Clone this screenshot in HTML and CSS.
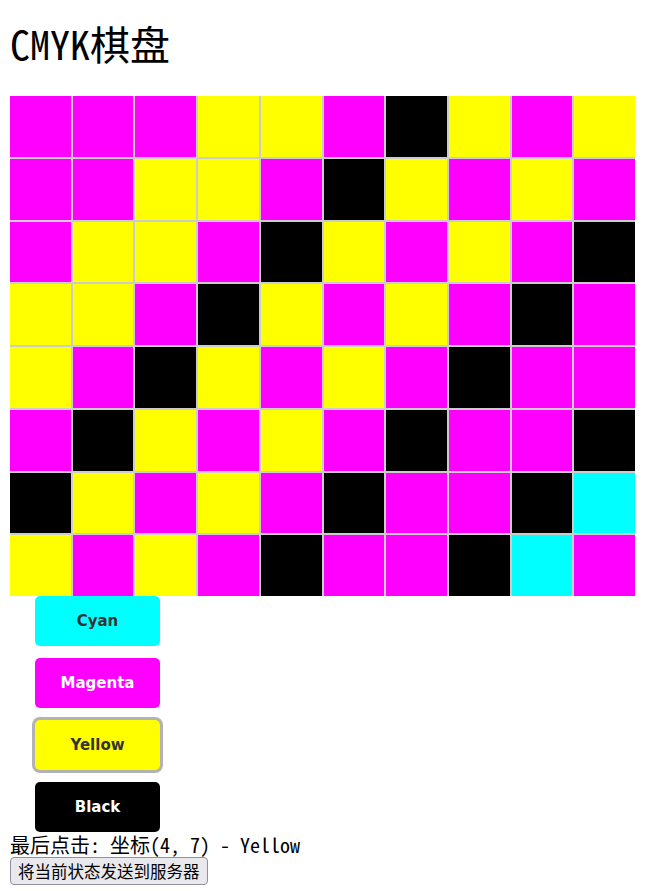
FILE: index.html
```html
<!DOCTYPE html>
<html lang="zh-CN">
<head>
<meta charset="UTF-8">
<meta name="viewport" content="width=device-width, initial-scale=1.0">
<title>CMYK棋盘</title>
<link rel="stylesheet" href="styles.css">
</head>
<body>
<h1>CMYK棋盘</h1>
<div class="board" id="board"></div>

<div class="palette">
    <button class="swatch cyan">Cyan</button>
    <button class="swatch magenta">Magenta</button>
    <button class="swatch yellow selected">Yellow</button>
    <button class="swatch black">Black</button>
</div>

<div class="status" id="status">最后点击: 坐标(4, 7) - Yellow</div>
<button class="send">将当前状态发送到服务器</button>

<script>
    const rows = [
        'MMMYYMKYMY',
        'MMYYMKYMYM',
        'MYYMKYMYMK',
        'YYMKYMYMKM',
        'YMKYMYMKMM',
        'MKYMYMKMMK',
        'KYMYMKMMKC',
        'YMYMKMMKCM'
    ];
    const names = { C: 'cyan', M: 'magenta', Y: 'yellow', K: 'black' };
    const board = document.getElementById('board');

    rows.forEach(row => {
        row.split('').forEach(ch => {
            const cell = document.createElement('div');
            cell.className = 'cell ' + names[ch];
            board.appendChild(cell);
        });
    });
</script>
</body>
</html>
```

FILE: styles.css
```css
body {
    margin: 0 10px;
    font-family: "Noto Sans Mono CJK SC", "Liberation Mono", "Noto Sans CJK SC", monospace;
    color: #000;
}
h1 {
    font-size: 40px;
    font-weight: normal;
    line-height: 42px;
    margin: 0 0 32px;
    padding-top: 22px;
}
.board {
    display: grid;
    grid-template-columns: repeat(10, 1fr);
    grid-template-rows: repeat(8, 1fr);
    gap: 2px;
    width: 625px;
    height: 500px;
    background-color: #ccc;
}
.cyan { background-color: #00ffff; }
.magenta { background-color: #ff00ff; }
.yellow { background-color: #ffff00; }
.black { background-color: #000000; }

.palette {
    display: flex;
    flex-direction: column;
    align-items: flex-start;
    gap: 12px;
    padding-left: 25px;
}
.swatch {
    width: 125px;
    height: 50px;
    border: none;
    border-radius: 5px;
    font-family: "DejaVu Sans", Verdana, sans-serif;
    font-size: 15px;
    font-weight: bold;
    color: #333;
    cursor: pointer;
}
.swatch.magenta, .swatch.black { color: #fff; }
.swatch.selected {
    box-shadow: 0 0 0 3px #b3b3b3;
}
.status {
    font-size: 20px;
    line-height: 24px;
    margin-top: 1px;
}
.send {
    font-family: "Noto Sans CJK SC", sans-serif;
    font-size: 16.5px;
    line-height: 22px;
    padding: 2px 7px;
    background-color: #e9e9ed;
    border: 1px solid #8f8f9d;
    border-radius: 4px;
    color: #000;
}
```
